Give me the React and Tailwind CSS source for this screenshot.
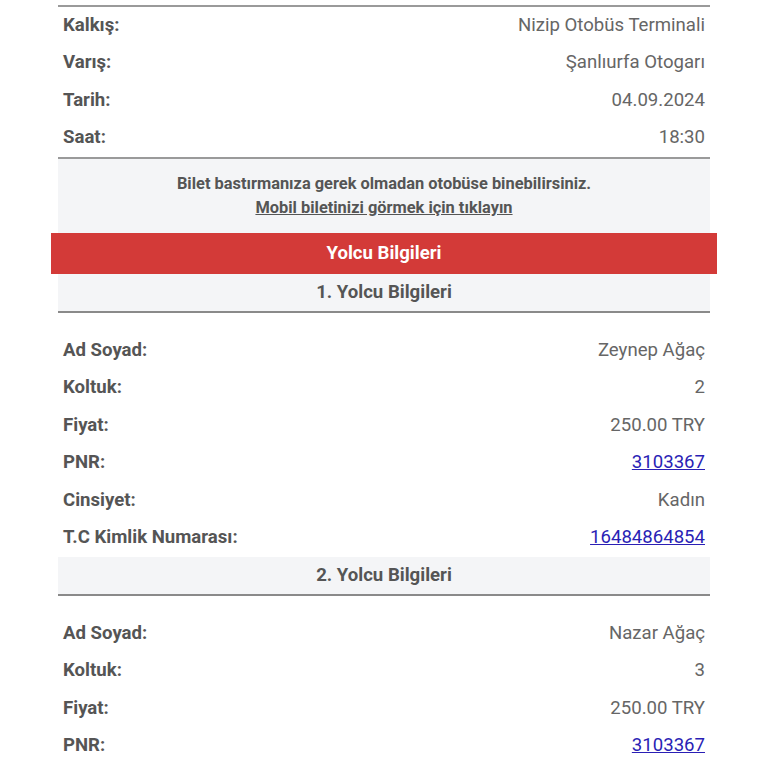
import React from 'react';

const trip = [
  ['Kalkış:', 'Nizip Otobüs Terminali'],
  ['Varış:', 'Şanlıurfa Otogarı'],
  ['Tarih:', '04.09.2024'],
  ['Saat:', '18:30'],
];

const passengers = [
  {
    title: '1. Yolcu Bilgileri',
    rows: [
      ['Ad Soyad:', 'Zeynep Ağaç'],
      ['Koltuk:', '2'],
      ['Fiyat:', '250.00 TRY'],
      ['PNR:', '3103367', true],
      ['Cinsiyet:', 'Kadın'],
      ['T.C Kimlik Numarası:', '16484864854', true],
    ],
  },
  {
    title: '2. Yolcu Bilgileri',
    rows: [
      ['Ad Soyad:', 'Nazar Ağaç'],
      ['Koltuk:', '3'],
      ['Fiyat:', '250.00 TRY'],
      ['PNR:', '3103367', true],
    ],
  },
];

function Row({ label, value, link }) {
  return (
    <div className="flex items-center justify-between h-[37.5px] px-[5px]">
      <span className="font-bold text-[#555]">{label}</span>
      {link ? (
        <a href="#" className="text-[#2a1fb5] underline">{value}</a>
      ) : (
        <span className="text-[#666]">{value}</span>
      )}
    </div>
  );
}

export default function App() {
  return (
    <div className="bg-white min-h-screen pt-[5px] text-[18.6px]" style={{ fontFamily: 'Roboto, "Liberation Sans", sans-serif' }}>
      <div className="w-[652px] ml-[58px]">
        {/* trip info */}
        <div className="border-t-2 border-b-2 border-[#9a9a9a]">
          {trip.map(([l, v]) => (
            <Row key={l} label={l} value={v} />
          ))}
        </div>

        <div className="bg-[#f4f5f7] h-[74px] flex flex-col items-center justify-center text-[16.4px] font-bold text-[#555] leading-[24px]">
          <p>Bilet bastırmanıza gerek olmadan otobüse binebilirsiniz.</p>
          <a href="#" className="underline">Mobil biletinizi görmek için tıklayın</a>
        </div>

        <div className="-mx-[7px] bg-[#d33a38] h-[41px] flex items-center justify-center text-white font-bold">
          Yolcu Bilgileri
        </div>

        {passengers.map((p) => (
          <div key={p.title}>
            <div className="bg-[#f4f5f7] h-[39px] flex items-center justify-center font-bold text-[#555] border-b-2 border-[#8a8a8a]">
              {p.title}
            </div>
            <div className="pt-[19px]">
              {p.rows.map(([l, v, link]) => (
                <Row key={l} label={l} value={v} link={link} />
              ))}
            </div>
          </div>
        ))}
      </div>
    </div>
  );
}
